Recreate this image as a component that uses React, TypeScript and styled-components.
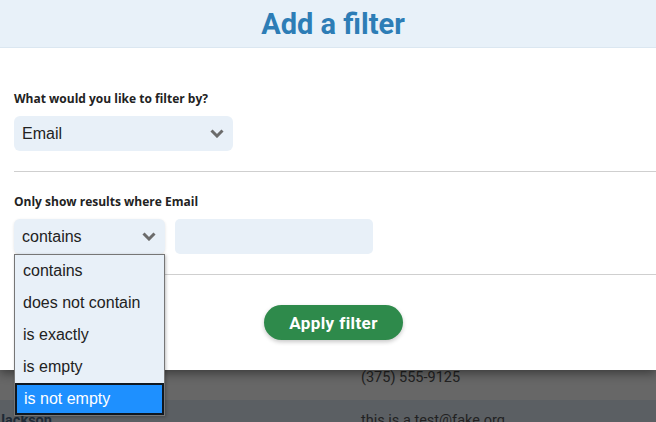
import React from "react";
import styled, { createGlobalStyle } from "styled-components";

const Global = createGlobalStyle`
  html, body { margin: 0; padding: 0; }
  body { width: 656px; height: 422px; overflow: hidden; background: #5b5f63; font-family: Roboto, "Liberation Sans", sans-serif; }
`;

const Page = styled.div`
  position: relative;
  width: 656px;
  height: 422px;
  overflow: hidden;
`;

const Table = styled.div`
  display: flex;
  flex-direction: column;
  padding-top: 340px;
`;

const Row = styled.div<{ $bg: string; $h: number }>`
  display: grid;
  grid-template-columns: 361px 1fr;
  align-items: center;
  height: ${(p) => p.$h}px;
  background: ${(p) => p.$bg};
  color: #222;
  font-family: Roboto, sans-serif;
  font-size: 14.5px;
`;

const Name = styled.span`
  font-weight: 700;
  color: #1e2a36;
  margin-left: -3px;
`;

const Cell = styled.span<{ $dy?: number }>`
  padding-top: ${(p) => p.$dy ?? 0}px;
  white-space: nowrap;
`;

const Modal = styled.div`
  position: absolute;
  top: 0;
  left: 0;
  right: 0;
  height: 370px;
  background: #fff;
  box-shadow: 0 3px 10px rgba(0, 0, 0, 0.45);
  display: flex;
  flex-direction: column;
`;

const Header = styled.div`
  height: 47px;
  background: #e8f1f9;
  border-bottom: 1px solid #dbe7f1;
  display: flex;
  align-items: center;
  justify-content: center;
`;

const Title = styled.h1`
  margin: 0;
  font-family: Roboto, sans-serif;
  font-weight: 700;
  font-size: 29px;
  color: #2d7db6;
  padding-left: 10px;
`;

const Body = styled.div`
  padding: 44px 0 0 14px;
  display: flex;
  flex-direction: column;
`;

const Label = styled.div`
  font-family: "Open Sans", sans-serif;
  font-weight: 700;
  font-size: 12px;
  color: #222;
  line-height: 14px;
  margin-bottom: 10px;
`;

const SelectBox = styled.div<{ $w: number; $shadow?: boolean }>`
  width: ${(p) => p.$w}px;
  height: 35px;
  box-sizing: border-box;
  background: #e8f0f8;
  border-radius: 6px;
  display: flex;
  align-items: center;
  justify-content: space-between;
  padding: 0 9px 0 8px;
  font-family: "Liberation Sans", Arial, sans-serif;
  font-size: 16px;
  color: #222;
  box-shadow: ${(p) => (p.$shadow ? "0 1px 3px rgba(0,0,0,0.12)" : "none")};
`;

const TextBox = styled.div`
  width: 198px;
  height: 35px;
  background: #e8f0f8;
  border-radius: 5px;
`;

const Divider = styled.hr<{ $top: number; $bottom: number }>`
  border: none;
  border-top: 1px solid #cfcfcf;
  margin: ${(p) => p.$top}px 0 ${(p) => p.$bottom}px 0;
`;

const Inline = styled.div`
  display: flex;
  gap: 10px;
  position: relative;
`;

const Actions = styled.div`
  display: flex;
  justify-content: center;
  padding-right: 3px;
`;

const Button = styled.button`
  width: 139px;
  height: 35px;
  border: none;
  border-radius: 18px;
  background: #2e8a4b;
  color: #fff;
  font-family: Roboto, sans-serif;
  font-weight: 700;
  font-size: 17px;
  letter-spacing: 0.4px;
  box-shadow: 0 2px 4px rgba(0, 0, 0, 0.22);
`;

const Dropdown = styled.ul`
  position: absolute;
  top: 254px;
  left: 14px;
  width: 151px;
  box-sizing: border-box;
  margin: 0;
  padding: 0;
  list-style: none;
  background: #e8f0f8;
  border: 1px solid #767676;
  box-shadow: 1px 1px 3px rgba(0, 0, 0, 0.25);
  z-index: 2;
`;

const Option = styled.li<{ $selected?: boolean }>`
  height: 32px;
  box-sizing: border-box;
  display: flex;
  align-items: center;
  padding-left: ${(p) => (p.$selected ? 7 : 8)}px;
  font-family: "Liberation Sans", Arial, sans-serif;
  font-size: 16px;
  color: ${(p) => (p.$selected ? "#fff" : "#222")};
  background: ${(p) => (p.$selected ? "#1e90ff" : "transparent")};
  border: ${(p) => (p.$selected ? "2px solid #101820" : "none")};
`;

const Chevron = () => (
  <svg width="14" height="9" viewBox="0 0 14 9">
    <polyline points="1.5,1.5 7,7 12.5,1.5" fill="none" stroke="#6b6b6b" strokeWidth="3" />
  </svg>
);

const options = ["contains", "does not contain", "is exactly", "is empty", "is not empty"];

export default function App() {
  return (
    <Page>
      <Global />
      <Table>
        <Row $bg="#676767" $h={60}>
          <span />
          <Cell $dy={14}>(375) 555-9125</Cell>
        </Row>
        <Row $bg="#5b5f63" $h={40}>
          <Name>Jackson</Name>
          <Cell>this is a test@fake.org</Cell>
        </Row>
      </Table>
      <Modal>
        <Header>
          <Title>Add a filter</Title>
        </Header>
        <Body>
          <Label>What would you like to filter by?</Label>
          <SelectBox $w={219}>
            <span>Email</span>
            <Chevron />
          </SelectBox>
          <Divider $top={20} $bottom={23} />
          <Label>Only show results where Email</Label>
          <Inline>
            <SelectBox $w={151} $shadow>
              <span>contains</span>
              <Chevron />
            </SelectBox>
            <TextBox />
          </Inline>
          <Divider $top={20} $bottom={30} />
          <Actions>
            <Button>Apply filter</Button>
          </Actions>
        </Body>
      </Modal>
      <Dropdown>
        {options.map((o, i) => (
          <Option key={o} $selected={i === options.length - 1}>
            {o}
          </Option>
        ))}
      </Dropdown>
    </Page>
  );
}
